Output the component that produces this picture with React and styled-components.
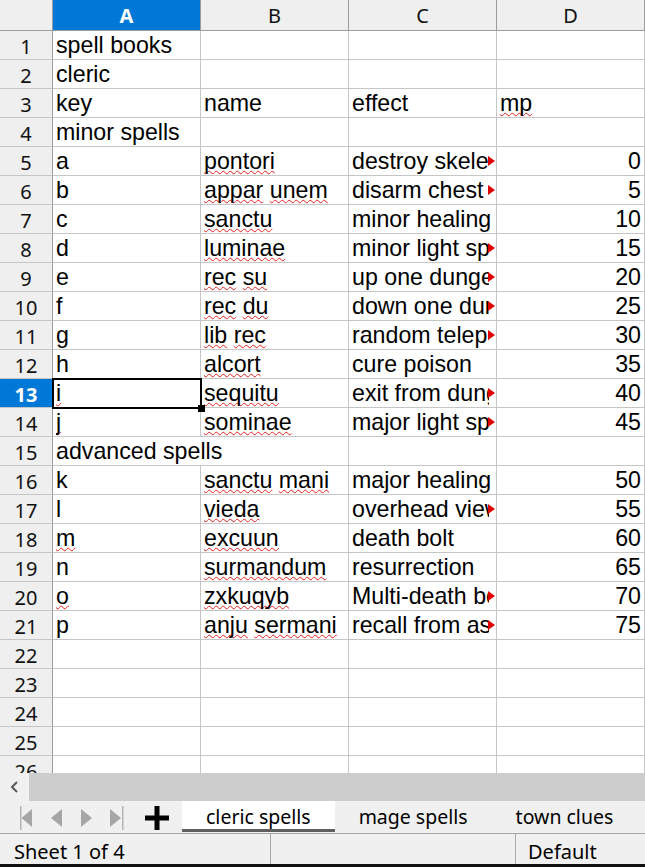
import React from 'react';
import styled, { createGlobalStyle } from 'styled-components';

const GlobalStyle = createGlobalStyle`
  html, body { margin: 0; padding: 0; background: #fff; }
  body { font-family: "Liberation Sans", Arial, sans-serif; }
`;

const UI_FONT = `"Noto Sans", "Open Sans", sans-serif`;
const GRID = '#c6c6c6';
const HEAD_LINE = '#9c9c9c';
const BLUE = '#0078d7';

const Window = styled.div`
  width: 645px;
  height: 867px;
  display: flex;
  flex-direction: column;
  overflow: hidden;
  background: #fff;
`;

const SheetArea = styled.div`
  flex: 1;
  overflow: hidden;
`;

const Grid = styled.div`
  display: grid;
  grid-template-columns: 53px repeat(4, 148px);
  grid-template-rows: 31px;
  grid-auto-rows: 29px;
`;

const Corner = styled.div`
  background: #efefef;
  border-right: 1px solid ${HEAD_LINE};
  border-bottom: 1px solid ${HEAD_LINE};
`;

const ColHead = styled.div`
  box-sizing: border-box;
  background: ${p => (p.$active ? BLUE : '#efefef')};
  color: ${p => (p.$active ? '#fff' : '#111')};
  font-weight: ${p => (p.$active ? 700 : 400)};
  font-family: ${UI_FONT};
  font-size: 20px;
  display: flex;
  align-items: center;
  justify-content: center;
  padding-top: 1px;
  border-right: 1px solid ${HEAD_LINE};
  border-bottom: 1px solid ${HEAD_LINE};
`;

const RowHead = styled.div`
  box-sizing: border-box;
  background: ${p => (p.$active ? BLUE : '#efefef')};
  color: ${p => (p.$active ? '#fff' : '#111')};
  font-weight: ${p => (p.$active ? 700 : 400)};
  font-family: ${UI_FONT};
  font-size: 20px;
  display: flex;
  align-items: center;
  justify-content: center;
  padding-top: 2px;
  border-right: 1px solid ${HEAD_LINE};
  border-bottom: 1px solid ${GRID};
`;

const Cell = styled.div`
  position: relative;
  box-sizing: border-box;
  height: 100%;
  grid-column: span ${p => p.$span || 1};
  border-right: 1px solid ${GRID};
  border-bottom: 1px solid ${GRID};
  font-size: 23.2px;
  line-height: 28px;
  color: #000;
  white-space: nowrap;
  padding: 0 ${p => (p.$more ? 7 : 3)}px 0 3px;
  text-align: ${p => (p.$num ? 'right' : 'left')};
`;

const Content = styled.div`
  overflow: hidden;
  height: 28px;
`;

const Selected = styled.div`
  position: absolute;
  left: -1px;
  top: -1px;
  right: -1px;
  bottom: -1px;
  border: 2px solid #000;
  pointer-events: none;
`;

const Handle = styled.div`
  position: absolute;
  right: -4px;
  bottom: -4px;
  width: 7px;
  height: 7px;
  background: #000;
  z-index: 2;
`;

const SelWrap = styled.div`
  position: relative;
  z-index: 3;
`;

const Marker = styled.span`
  position: absolute;
  right: 1px;
  top: 9px;
  width: 0;
  height: 0;
  border-top: 5px solid transparent;
  border-bottom: 5px solid transparent;
  border-left: 7px solid #e00000;
`;

const Typo = styled.span`
  text-decoration: underline wavy #e82020;
  text-decoration-thickness: 1.3px;
  text-underline-offset: 1px;
  text-decoration-skip-ink: none;
`;

const ScrollRow = styled.div`
  height: 28px;
  display: flex;
  background: #f0f0f0;
`;

const ScrollBtn = styled.div`
  width: 29px;
  display: flex;
  align-items: center;
  justify-content: center;
`;

const Track = styled.div`
  flex: 1;
  background: #cdcdcd;
`;

const TabBar = styled.div`
  height: 32px;
  display: flex;
  align-items: stretch;
  background: #f0f0f0;
  border-bottom: 1px solid #a8a8a8;
  font-family: ${UI_FONT};
  font-size: 19.5px;
`;

const Nav = styled.div`
  display: flex;
  padding-left: 15px;
`;

const NavBtn = styled.div`
  width: 30px;
  display: flex;
  align-items: flex-start;
  padding-top: 5px;
  padding-left: ${p => p.$pad}px;
  box-sizing: border-box;
`;

const AddBtn = styled.div`
  width: 36px;
  margin-left: 4px;
  display: flex;
  justify-content: center;
  padding-top: 5px;
`;

const Tabs = styled.div`
  display: flex;
  margin-left: 7px;
`;

const Tab = styled.div`
  box-sizing: border-box;
  height: 31px;
  padding: 3px 24px 0;
  display: flex;
  align-items: center;
  color: #000;
  background: ${p => (p.$active ? '#fff' : 'transparent')};
  border-bottom: 3px solid ${p => (p.$active ? '#5f5f5f' : 'transparent')};
  white-space: nowrap;
`;

const StatusBar = styled.div`
  height: 30px;
  display: flex;
  background: #f0f0f0;
  border-bottom: 3px solid #111;
  font-family: ${UI_FONT};
  font-size: 20px;
  color: #000;
`;

const StatusCell = styled.div`
  width: ${p => p.$w || 'auto'};
  flex: ${p => (p.$w ? 'none' : 1)};
  box-sizing: border-box;
  padding: 4px 0 0 ${p => p.$pad || 0}px;
  border-right: ${p => (p.$sep ? '1px solid #a8a8a8' : 'none')};
  display: flex;
  align-items: center;
`;

// values starting with ~ are flagged by the spell checker, more = text runs past the cell
const rows = [
  { a: 'spell books' },
  { a: 'cleric' },
  { a: 'key', b: 'name', c: 'effect', d: '~mp', dText: true },
  { a: 'minor spells' },
  { a: 'a', b: '~pontori', c: 'destroy skeleton', d: 0, more: true },
  { a: 'b', b: '~appar unem', c: 'disarm chest trap', d: 5, more: true },
  { a: 'c', b: '~sanctu', c: 'minor healing', d: 10 },
  { a: 'd', b: '~luminae', c: 'minor light spell', d: 15, more: true },
  { a: 'e', b: '~rec su', c: 'up one dungeon level', d: 20, more: true },
  { a: 'f', b: '~rec du', c: 'down one dungeon level', d: 25, more: true },
  { a: 'g', b: '~lib rec', c: 'random teleport', d: 30, more: true },
  { a: 'h', b: '~alcort', c: 'cure poison', d: 35 },
  { a: '~i', b: '~sequitu', c: 'exit from dungeon', d: 40, more: true, sel: true },
  { a: '~j', b: '~sominae', c: 'major light spell', d: 45, more: true },
  { a: 'advanced spells', wide: true },
  { a: 'k', b: '~sanctu mani', c: 'major healing', d: 50 },
  { a: 'l', b: '~vieda', c: 'overhead view', d: 55, more: true },
  { a: '~m', b: '~excuun', c: 'death bolt', d: 60 },
  { a: 'n', b: '~surmandum', c: 'resurrection', d: 65 },
  { a: '~o', b: '~zxkuqyb', c: 'Multi-death bolt', d: 70, more: true },
  { a: 'p', b: '~anju sermani', c: 'recall from astral', d: 75, more: true },
  {}, {}, {}, {}, {},
];

const Text = ({ value }) => {
  if (value === undefined || value === null) return null;
  const s = String(value);
  if (!s.startsWith('~')) return s;
  const words = s.slice(1).split(' ');
  return words.map((w, i) => (
    <React.Fragment key={i}>
      {i > 0 && ' '}
      <Typo>{w}</Typo>
    </React.Fragment>
  ));
};

const FirstIcon = () => (
  <svg width="14" height="24" viewBox="0 0 14 24">
    <rect x="0" y="0" width="1.5" height="24" fill="#b4b4b4" />
    <polygon points="1.5,12 12,3 12,21" fill="#a6a6a6" />
  </svg>
);
const PrevIcon = () => (
  <svg width="14" height="24" viewBox="0 0 14 24">
    <polygon points="1,12 12,3 12,21" fill="#a6a6a6" />
  </svg>
);
const NextIcon = () => (
  <svg width="14" height="24" viewBox="0 0 14 24">
    <polygon points="13,12 2,3 2,21" fill="#a6a6a6" />
  </svg>
);
const LastIcon = () => (
  <svg width="16" height="24" viewBox="0 0 16 24">
    <polygon points="12,12 1,3 1,21" fill="#a6a6a6" />
    <rect x="13" y="0" width="1.5" height="24" fill="#b4b4b4" />
  </svg>
);

const App = () => (
  <>
    <GlobalStyle />
    <Window>
      <SheetArea>
        <Grid>
          <Corner />
          {['A', 'B', 'C', 'D'].map(c => (
            <ColHead key={c} $active={c === 'A'}>{c}</ColHead>
          ))}
          {rows.map((r, i) => (
            <React.Fragment key={i}>
              <RowHead $active={r.sel}>{i + 1}</RowHead>
              {r.wide ? (
                <Cell $span={2}><Content><Text value={r.a} /></Content></Cell>
              ) : r.sel ? (
                <SelWrap>
                  <Cell><Content><Text value={r.a} /></Content></Cell>
                  <Selected />
                  <Handle />
                </SelWrap>
              ) : (
                <Cell><Content><Text value={r.a} /></Content></Cell>
              )}
              {!r.wide && <Cell><Content><Text value={r.b} /></Content></Cell>}
              <Cell $more={r.more}>
                <Content><Text value={r.c} /></Content>
                {r.more && <Marker />}
              </Cell>
              <Cell $num={!r.dText}><Content><Text value={r.d} /></Content></Cell>
            </React.Fragment>
          ))}
        </Grid>
      </SheetArea>

      <ScrollRow>
        <ScrollBtn>
          <svg width="10" height="14" viewBox="0 0 10 14">
            <polyline points="7,2 2,7 7,12" fill="none" stroke="#5a5a5a" strokeWidth="2" />
          </svg>
        </ScrollBtn>
        <Track />
      </ScrollRow>

      <TabBar>
        <Nav>
          <NavBtn $pad={5}><FirstIcon /></NavBtn>
          <NavBtn $pad={5}><PrevIcon /></NavBtn>
          <NavBtn $pad={4}><NextIcon /></NavBtn>
          <NavBtn $pad={4}><LastIcon /></NavBtn>
        </Nav>
        <AddBtn>
          <svg width="24" height="24" viewBox="0 0 24 24">
            <rect x="0" y="9.5" width="24" height="5" fill="#000" />
            <rect x="9.5" y="0" width="5" height="24" fill="#000" />
          </svg>
        </AddBtn>
        <Tabs>
          <Tab $active>cleric spells</Tab>
          <Tab>mage spells</Tab>
          <Tab>town clues</Tab>
        </Tabs>
      </TabBar>

      <StatusBar>
        <StatusCell $w="271px" $pad={14} $sep>Sheet 1 of 4</StatusCell>
        <StatusCell $w="245px" $sep />
        <StatusCell $pad={12}>Default</StatusCell>
      </StatusBar>
    </Window>
  </>
);

export default App;
